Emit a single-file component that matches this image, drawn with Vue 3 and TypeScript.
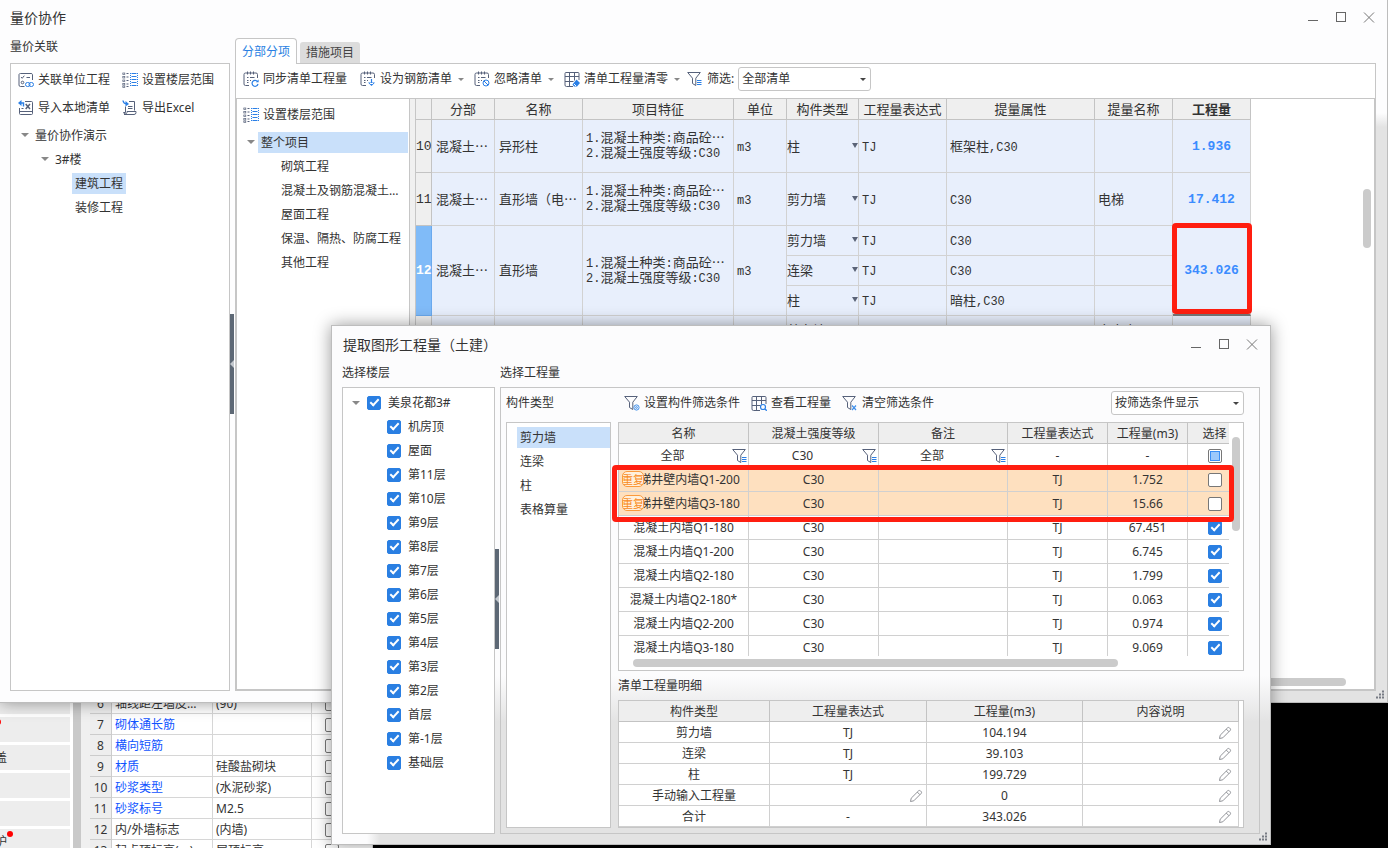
<script setup lang="ts">
import { defineComponent, h, ref } from 'vue'

const D = '#56617a'
const B = '#2a7fe6'
const note = `<path d="M14.500 7V3.500a1.500 1.500 0 0 0-1.500-1.500H2.500A1.500 1.500 0 0 0 1 3.500V13A1.500 1.500 0 0 0 2.500 14.500H6M4.500 0.500V3.500M7.500 0.500V3.500M10.500 0.500V3.500" stroke="${D}"/><path d="M4 6.500H5.500M7 6.500H11.500M4 9.500H5.500M7 9.500H8M4 11.500H5.500" stroke="${D}"/>`
const funnel = `<path d="M0.700 1.500H13.300L8.800 7.200V14.500L5.500 12.500V7.200Z" stroke="${D}"/>`
const grid = `<path d="M9 15.500H2.500A1.500 1.500 0 0 1 1 14V2.500A1 1 0 0 1 2 1.500H14A1 1 0 0 1 15 2.500V9M1 5.500H15M1 10.500H9.500M5.500 1.500V15.500M10.500 1.500V9.500" stroke="${D}"/>`
const rings = [2, 5.5, 9, 12.5, 15]
  .map((y) => `<rect x="0.800" y="${y - 1}" width="2" height="1.500" stroke="${D}" stroke-width="0.700"/><path d="M4.500 ${y - 0.5}H6.500" stroke="${D}"/>`)
  .join('')

const art: Record<string, string> = {
  link: `<path d="M14.500 8V2.500A1.500 1.500 0 0 0 13 1.500H2.500A1.500 1.500 0 0 0 1 2.500V13A1.500 1.500 0 0 0 2.500 14.500H6.500" stroke="${D}"/><path d="M3 5L4.200 6.300L6.300 3.700M8.500 5.500H12" stroke="${D}"/><circle cx="4.500" cy="10.500" r="1.300" stroke="${D}"/><rect x="7.500" y="10.500" width="4.500" height="4" rx="2" stroke="${B}"/><rect x="11" y="10.500" width="4.500" height="4" rx="2" stroke="${B}"/>`,
  range: rings + `<path d="M9.500 1.500H14.500M9.500 4.500H14.500M9.500 7.500H14.500M9.500 10.500H14.500M9.500 13.500H14.500" stroke="${B}"/><path d="M8.500 1V15M15.500 1V15" stroke="${B}" stroke-dasharray="1 1"/>`,
  importX: `<path d="M7 1.500H13.500A1 1 0 0 1 14.500 2.500V13.500A1 1 0 0 1 13.500 14.500H2.500A1 1 0 0 1 1.500 13.500V8M1.500 11.500H14.500M3.500 8.500H5.500" stroke="${D}"/><path d="M7.700 4L12 9M12 4L7.700 9" stroke="${D}" stroke-width="1.500"/><path d="M5.500 6.500V3H2" stroke="${B}" stroke-width="1.400"/><path d="M3.500 0V6L0 3Z" fill="${B}"/>`,
  exportX: `<path d="M7 1.500H12.500V10.500M3.500 6.500V12.500M2 14.500H12A2 2 0 0 0 14 12.500V11.500H5V12.500A1.800 1.800 0 0 1 1.500 12.500H3.500M6 6.500H10.500M6 8.500H10.500" stroke="${D}"/><path d="M1 0.500Q1.500 3.500 4 3.700" stroke="${B}" stroke-width="1.400"/><path d="M3.500 1L7 4L3.500 6.500Z" fill="${B}"/>`,
  sync: note + `<path d="M14.500 10.500A3 3 0 1 0 15 13" stroke="${B}" stroke-width="1.200"/><path d="M15.600 8.500V11.300H12.800Z" fill="${B}"/>`,
  rebar: note + `<path d="M11.500 8V13" stroke="${B}" stroke-width="1.200"/><path d="M8 11.500H15L11.500 15Z" fill="${B}"/><path d="M10 12.500H13" stroke="#fff"/>`,
  ignore: note + `<circle cx="12" cy="12" r="3" stroke="${B}"/><path d="M10 10L14 14" stroke="${B}"/>`,
  clear: grid + `<path d="M12.500 8.500L16 12L13 15.500H10L8.500 13.500Z" fill="${B}"/><path d="M10 13L12 15" stroke="#fff"/>`,
  view: grid + `<circle cx="12" cy="12" r="2.500" stroke="${B}" stroke-width="1.200"/><path d="M14 14L15.800 15.800" stroke="${B}" stroke-width="1.300"/>`,
  filter: funnel + `<path d="M10 9.500H14.500M10 11.500H14.500M10 13.500H14.500" stroke="${B}"/>`,
  filterSet: funnel + `<circle cx="12.500" cy="12.500" r="2.600" stroke="#3f8fea"/><circle cx="12.500" cy="12.500" r="0.900" stroke="#3f8fea"/>`,
  filterX: funnel + `<path d="M10 10.500L14 15M14 10.500L10 15" stroke="#3f8fea" stroke-width="1.200"/>`,
  pencil: `<path d="M2.500 13.500L3.200 10.200L10.600 2.800Q11.500 2 12.500 2.900L13.100 3.500Q14 4.500 13.200 5.400L5.800 12.800ZM9.300 4.100L11.900 6.700" stroke="#85878c" stroke-width="0.900"/>`,
  min: `<path d="M3 10.500H13" stroke="#666"/>`,
  max: `<rect x="3.500" y="2.500" width="9" height="9" stroke="#666"/>`,
  close: `<path d="M3 2.500L13 12.500M13 2.500L3 12.500" stroke="#777"/>`,
  grip: `<path d="M7 1.500H9M4 4.500H6M7 4.500H9M1 7.500H3M4 7.500H6M7 7.500H9" stroke="#777b84" stroke-width="2"/>`,
}

const Ico = defineComponent({
  props: { n: { type: String, required: true } },
  setup: (p) => () =>
    h('svg', { width: 16, height: 16, viewBox: '0 0 16 16', fill: 'none', 'aria-hidden': 'true', innerHTML: art[p.n] }),
})

const Mixed = defineComponent({
  props: { t: { type: String, required: true } },
  setup: (p) => () =>
    h('span', { class: 'mixed' }, p.t.split(/([\x20-\x7e]+)/).filter(Boolean).map((s) =>
      /^[\x20-\x7e]/.test(s) ? h('span', { class: 'mono' }, s) : s)),
})

const mainFilter = ref('全部清单')
const dialogFilter = ref('按筛选条件显示')

interface Sub { kind: string; attr: string; name: string }
interface Item { no: string; title: string; qty: string; subs: Sub[] }
const items: Item[] = [
  { no: '10', title: '异形柱', qty: '1.936', subs: [{ kind: '柱', attr: '框架柱,C30', name: '' }] },
  { no: '11', title: '直形墙（电…', qty: '17.412', subs: [{ kind: '剪力墙', attr: 'C30', name: '电梯' }] },
  { no: '12', title: '直形墙', qty: '343.026', subs: [
    { kind: '剪力墙', attr: 'C30', name: '' },
    { kind: '连梁', attr: 'C30', name: '' },
    { kind: '柱', attr: '暗柱,C30', name: '' }] },
  { no: '', title: '', qty: '', subs: [{ kind: '剪力墙', attr: 'C30', name: '自密实' }] },
]
const gridHeads = ['', '分部', '名称', '项目特征', '单位', '构件类型', '工程量表达式', '提量属性', '提量名称', '工程量']
const gridWidths = [16, 63, 88, 151, 53, 72, 88, 148, 78, 78]
const sections = ['砌筑工程', '混凝土及钢筋混凝土…', '屋面工程', '保温、隔热、防腐工程', '其他工程']
const floors = ['机房顶', '屋面', '第11层', '第10层', '第9层', '第8层', '第7层', '第6层', '第5层', '第4层', '第3层', '第2层', '首层', '第-1层', '基础层']
const kinds = ['剪力墙', '连梁', '柱', '表格算量']
const walls = [
  { name: '电梯井壁内墙Q1-200', v: '1.752', dup: true },
  { name: '电梯井壁内墙Q3-180', v: '15.66', dup: true },
  { name: '混凝土内墙Q1-180', v: '67.451', dup: false },
  { name: '混凝土内墙Q1-200', v: '6.745', dup: false },
  { name: '混凝土内墙Q2-180', v: '1.799', dup: false },
  { name: '混凝土内墙Q2-180*', v: '0.063', dup: false },
  { name: '混凝土内墙Q2-200', v: '0.974', dup: false },
  { name: '混凝土内墙Q3-180', v: '9.069', dup: false },
]
const details = [
  ['剪力墙', 'TJ', '104.194'], ['连梁', 'TJ', '39.103'], ['柱', 'TJ', '199.729'],
  ['手动输入工程量', '', '0'], ['合计', '-', '343.026'],
]
const props = [
  { n: '6', k: '轴线距左墙皮…', v: '(90)', blue: false },
  { n: '7', k: '砌体通长筋', v: '', blue: true },
  { n: '8', k: '横向短筋', v: '', blue: true },
  { n: '9', k: '材质', v: '硅酸盐砌块', blue: true },
  { n: '10', k: '砂浆类型', v: '(水泥砂浆)', blue: true },
  { n: '11', k: '砂浆标号', v: 'M2.5', blue: true },
  { n: '12', k: '内/外墙标志', v: '(内墙)', blue: false },
  { n: '13', k: '起点顶标高(m)', v: '层顶标高', blue: false },
]
const modules = [
  { t: '', dot: false }, { t: '', dot: true }, { t: '盖', dot: false },
  { t: '', dot: false }, { t: '', dot: false }, { t: '护', dot: true },
]
</script>

<template>
  <div class="desktop">
    <div class="backdrop">
      <ul class="modules">
        <li v-for="(m, i) in modules" :key="i"><span>{{ m.t }}<i v-if="m.dot" class="dot"></i></span></li>
      </ul>
      <div class="back-scroll"></div>
      <div class="back-props">
        <table>
          <tbody>
            <tr v-for="p in props" :key="p.n">
              <th scope="row">{{ p.n }}</th>
              <td :class="{ blue: p.blue }">{{ p.k }}</td>
              <td>{{ p.v }}</td>
              <td><input type="checkbox" class="ck" :aria-label="p.k" /></td>
            </tr>
          </tbody>
        </table>
      </div>
    </div>

    <section class="win main-win">
      <header class="title">
        <h1>量价协作</h1>
        <div class="win-btns">
          <button aria-label="最小化"><Ico n="min" /></button>
          <button aria-label="最大化"><Ico n="max" /></button>
          <button aria-label="关闭"><Ico n="close" /></button>
        </div>
      </header>
      <div class="main-body">
        <aside class="link-col">
          <h2>量价关联</h2>
          <div class="box link-box">
            <div class="tool-grid">
              <button><Ico n="link" />关联单位工程</button>
              <button><Ico n="range" />设置楼层范围</button>
              <button><Ico n="importX" />导入本地清单</button>
              <button><Ico n="exportX" />导出Excel</button>
            </div>
            <ul class="tree">
              <li class="l1"><i class="arr"></i><span>量价协作演示</span></li>
              <li class="l2"><i class="arr"></i><span>3#楼</span></li>
              <li class="l3"><span class="sel">建筑工程</span></li>
              <li class="l3"><span>装修工程</span></li>
            </ul>
          </div>
        </aside>
        <div class="splitter"><i></i></div>
        <div class="work-col">
          <nav class="tabs">
            <button class="on">分部分项</button>
            <button>措施项目</button>
          </nav>
          <div class="work">
            <div class="toolbar">
              <button><Ico n="sync" />同步清单工程量</button>
              <button><Ico n="rebar" />设为钢筋清单<i class="arr"></i></button>
              <button><Ico n="ignore" />忽略清单<i class="arr"></i></button>
              <button><Ico n="clear" />清单工程量清零<i class="arr"></i></button>
              <label class="filter" for="mf"><Ico n="filter" />筛选:</label>
              <div class="pick"><select id="mf" v-model="mainFilter"><option>全部清单</option></select></div>
            </div>
            <div class="work-row">
              <div class="project">
                <button class="set-range"><Ico n="range" />设置楼层范围</button>
                <ul class="ptree">
                  <li class="root"><i class="arr"></i><span>整个项目</span></li>
                  <li v-for="s in sections" :key="s">{{ s }}</li>
                </ul>
              </div>
              <div class="sheet">
                <table class="bill">
                  <colgroup><col v-for="(w, i) in gridWidths" :key="i" :style="{ width: w + 'px' }" /></colgroup>
                  <thead><tr><th v-for="(t, i) in gridHeads" :key="i" scope="col">{{ t }}</th></tr></thead>
                  <tbody v-for="it in items" :key="it.no">
                    <tr v-for="(s, i) in it.subs" :key="i" :class="{ tall: it.subs.length === 1 && it.no }">
                      <template v-if="i === 0">
                        <th scope="row" :rowspan="it.subs.length" :class="{ cur: it.no === '12' }">{{ it.no }}</th>
                        <td :rowspan="it.subs.length" class="pad">{{ it.no ? '混凝土…' : '' }}</td>
                        <td :rowspan="it.subs.length" class="pad">{{ it.title }}</td>
                        <td :rowspan="it.subs.length" class="feat">
                          <template v-if="it.no"><Mixed t="1.混凝土种类:商品砼…" /><Mixed t="2.混凝土强度等级:C30" /></template>
                        </td>
                        <td :rowspan="it.subs.length" class="mid"><Mixed :t="it.no ? 'm3' : ''" /></td>
                      </template>
                      <td class="kind"><div>{{ s.kind }}<i class="arr"></i></div></td>
                      <td class="mid"><Mixed t="TJ" /></td>
                      <td class="mid"><Mixed :t="s.attr" /></td>
                      <td class="mid">{{ s.name }}</td>
                      <td v-if="i === 0" :rowspan="it.subs.length" class="qty" :class="{ picked: it.no === '12' }">{{ it.qty }}<i v-if="it.no === '12'" class="mark"></i></td>
                    </tr>
                  </tbody>
                </table>
                <i class="vbar"></i><i class="hbar"></i>
              </div>
            </div>
          </div>
        </div>
      </div>
      <span class="grip"><Ico n="grip" /></span>
    </section>

    <section class="win dialog" role="dialog" aria-label="提取图形工程量（土建）">
      <header class="title">
        <h1>提取图形工程量（土建）</h1>
        <div class="win-btns">
          <button aria-label="最小化"><Ico n="min" /></button>
          <button aria-label="最大化"><Ico n="max" /></button>
          <button aria-label="关闭"><Ico n="close" /></button>
        </div>
      </header>
      <div class="dlg-body">
        <aside class="floor-col">
          <h2>选择楼层</h2>
          <ul class="box floors">
            <li class="root"><i class="arr"></i><label><input type="checkbox" class="ck" checked />美泉花都3#</label></li>
            <li v-for="f in floors" :key="f"><label><input type="checkbox" class="ck" checked />{{ f }}</label></li>
          </ul>
        </aside>
        <div class="splitter dsplit"><i></i></div>
        <div class="qty-col">
          <h2>选择工程量</h2>
          <div class="group">
            <div class="kind-col">
              <h3>构件类型</h3>
              <ul class="box kinds"><li v-for="(k, i) in kinds" :key="k" :class="{ sel: i === 0 }">{{ k }}</li></ul>
            </div>
            <div class="tables">
              <div class="dtools">
                <button><Ico n="filterSet" />设置构件筛选条件</button>
                <button><Ico n="view" />查看工程量</button>
                <button><Ico n="filterX" />清空筛选条件</button>
                <div class="pick"><select v-model="dialogFilter" aria-label="显示方式"><option>按筛选条件显示</option></select></div>
              </div>
              <div class="box wall-box">
                <div class="clip">
                  <table class="plain walls">
                    <colgroup><col class="w130" /><col class="w130" /><col class="w129" /><col class="w100" /><col class="w80" /><col class="w54" /></colgroup>
                    <thead>
                      <tr><th scope="col">名称</th><th scope="col">混凝土强度等级</th><th scope="col">备注</th><th scope="col">工程量表达式</th><th scope="col">工程量(m3)</th><th scope="col">选择</th></tr>
                    </thead>
                    <tbody>
                      <tr>
                        <td v-for="(t, i) in ['全部', 'C30', '全部']" :key="i"><div class="ff"><span>{{ t }}</span><button aria-label="筛选"><Ico n="filter" /></button></div></td>
                        <td>-</td><td>-</td>
                        <td><input type="checkbox" class="ck part" aria-label="全选" /></td>
                      </tr>
                      <tr v-for="w in walls" :key="w.name" :class="{ dup: w.dup }">
                        <td>{{ w.name }}<b v-if="w.dup" class="badge">重复</b></td><td>C30</td><td></td><td>TJ</td><td>{{ w.v }}</td>
                        <td><input type="checkbox" class="ck" :checked="!w.dup" :aria-label="w.name" /></td>
                      </tr>
                    </tbody>
                  </table>
                </div>
                <i class="vbar"></i><i class="hbar"></i><i class="mark"></i>
              </div>
              <h3 class="detail-title">清单工程量明细</h3>
              <div class="box detail-box">
                <table class="plain details">
                  <colgroup><col class="w151" /><col class="w157" /><col class="w156" /><col class="w156" /></colgroup>
                  <thead><tr><th scope="col">构件类型</th><th scope="col">工程量表达式</th><th scope="col">工程量(m3)</th><th scope="col">内容说明</th></tr></thead>
                  <tbody>
                    <tr v-for="d in details" :key="d[0]">
                      <td>{{ d[0] }}</td>
                      <td>{{ d[1] }}<button v-if="!d[1]" class="edit" aria-label="编辑"><Ico n="pencil" /></button></td>
                      <td>{{ d[2] }}</td>
                      <td><button class="edit" aria-label="编辑"><Ico n="pencil" /></button></td>
                    </tr>
                  </tbody>
                </table>
              </div>
            </div>
          </div>
        </div>
      </div>
      <span class="grip"><Ico n="grip" /></span>
    </section>
  </div>
</template>

<style>
body { background: #000; }
.mixed { display: block; height: 15px; }
.mono { font-family: "Liberation Mono", monospace; font-size: 12px; }
</style>

<style scoped>
.desktop {
  position: relative; height: 100vh; overflow: hidden; background: #000; color: #333;
  font: 12px/24px "Noto Sans", "Noto Sans CJK SC", sans-serif;
}
.desktop *, .desktop *::before, .desktop *::after { box-sizing: border-box; }
ul { list-style: none; margin: 0; padding: 0; }
h1, h2, h3 { margin: 0; font-size: 12px; font-weight: 400; }
h1 { font-size: 14px; }
button { border: 0; background: none; padding: 0; margin: 0; font: inherit; color: inherit; display: flex; align-items: center; white-space: nowrap; }
svg { display: block; flex: none; }
table { border-collapse: separate; border-spacing: 0; table-layout: fixed; }
th, td { padding: 0; font-weight: 400; white-space: nowrap; }
.box { border: 1px solid #c6c6c6; background: #fff; }
.arr { flex: none; border: 4px solid transparent; border-top: 4px solid #888; border-bottom: 0; }
.mark { position: absolute; border: 5px solid #ff1e10; border-radius: 4px; }

.ck { appearance: none; flex: none; display: block; position: relative; width: 14px; height: 14px; margin: 0; border: 1px solid #777; border-radius: 2px; background: #fff; }
.ck:checked { border-color: #2a7fe2; background: #2a7fe2; }
.ck:checked::after { content: ""; position: absolute; left: 2px; top: 2px; width: 9px; height: 5px; border: solid #fff; border-width: 0 0 2px 2px; transform: rotate(-47deg); }
.ck.part::after { content: ""; position: absolute; inset: 1px; border: 1px solid #3a8ef6; background: #9cc8fb; }

.backdrop { position: absolute; left: 0; bottom: 0; display: flex; width: 373px; height: 162px; background: #fff; }
.modules { width: 70px; padding-top: 3px; overflow: hidden; flex: none; }
.modules li { height: 25px; margin-bottom: 3px; background: #ededed; line-height: 25px; }
.modules span { position: relative; display: block; width: 12px; height: 25px; margin-left: -5px; }
.modules li:nth-child(2) span { margin-left: -17px; }
.dot { position: absolute; right: -6px; top: 2px; width: 6px; height: 6px; border-radius: 3px; background: #f00; }
.back-scroll { flex: none; width: 20px; border: solid #fff; border-width: 0 0 0 3px; border-right: 9px solid #f0f0f0; background: #c9c9c9; }
.back-props { flex: 1; padding-top: 7px; overflow: hidden; background: #f4f4f4; }
.back-props table { width: 100%; background: #fff; }
.back-props th, .back-props td { height: 21px; line-height: 18px; padding-top: 2px; }
.back-props th { width: 22px; background: #eee; border: solid #ccc; border-width: 0 1px 1px 0; }
.back-props td { width: 101px; padding-left: 3px; border: solid #d6d6d6; border-width: 0 1px 1px 0; }
.back-props td:nth-child(3) { width: 99px; }
.back-props td:nth-child(4) { width: auto; padding-left: 13px; }
.blue { color: #0f53ff; }

.win { position: absolute; display: flex; flex-direction: column; border: 1px solid #bdbdbd; box-shadow: 0 0 16px rgba(0, 0, 0, .4); }
.main-win {
  inset: 0 0 145px 0; padding: 0 11px 11px 10px; border-left: 0; border-top: 0;
  background: linear-gradient(#fdfdfe 0 113px, #e3e3e3 127px) right top / 200px 100% no-repeat, linear-gradient(90deg, #fdfdfe 370px, #e3e3e3 420px) bottom / 100% 14px no-repeat, #fdfdfe;
}
.title { display: flex; justify-content: space-between; align-items: center; height: 34px; flex: none; padding-top: 2px; }
.title .win-btns { display: flex; gap: 12px; }
.main-win .win-btns { margin-right: -1px; }
.grip { position: absolute; right: -4px; bottom: -4px; }
.main-body { flex: 1; display: flex; min-height: 0; }
.link-col { flex: none; width: 220px; display: flex; flex-direction: column; }
.link-col h2 { height: 29px; line-height: 26px; }
.link-box { flex: 1; padding-top: 2px; }
.tool-grid { display: grid; grid-template-columns: 104px 1fr; grid-auto-rows: 28px; padding-left: 7px; }
.tool-grid button { gap: 4px; }
.tree { padding-top: 1px; }
.tree li { display: flex; align-items: center; height: 24px; gap: 3px; padding-left: 10px; }
.tree .l2 { padding-left: 30px; }
.tree .l3 { padding-left: 61px; }
.tree li span, .ptree li span { height: 21px; line-height: 21px; padding: 0 3px; }
.tree .arr, .ptree .arr { margin-bottom: 1px; }
.sel { background: #c9e0fa; }
.splitter { flex: none; width: 5px; display: flex; align-items: center; }
.splitter i { width: 4px; height: 100px; background: #5d6875; display: flex; align-items: center; }
.main-win .splitter { align-items: flex-start; padding-top: 280px; }
.splitter i::after { content: ""; border: 4px solid transparent; border-right-color: #c3c8ce; border-left: 0; }
.work-col { flex: 1; min-width: 0; display: flex; flex-direction: column; }
.tabs { display: flex; align-items: flex-end; gap: 3px; height: 29px; flex: none; margin-top: 1px; position: relative; z-index: 1; margin-bottom: -1px; }
.tabs button { width: 60px; height: 21px; margin-bottom: 1px; justify-content: center; border-radius: 3px 3px 0 0; background: #dcdcdc; color: #444; }
.tabs .on { width: 62px; height: 26px; margin: 0; border: 1px solid #c6c6c6; border-bottom: 0; border-radius: 4px 4px 0 0; background: #fff; color: #2a7fe2; }
.work { flex: 1; display: flex; flex-direction: column; min-height: 0; border: 1px solid #c6c6c6; background: #fff; }
.toolbar { height: 34px; flex: none; display: flex; align-items: center; padding: 0 7px 4px; }
.toolbar button, .toolbar .filter { gap: 4px; margin-right: 13px; display: flex; align-items: center; }
.toolbar .arr, .pick::after { border: 3px solid transparent; border-top: 3px solid #888; border-bottom: 0; }
.toolbar button .arr { margin-left: 2px; margin-right: -3px; }
.toolbar .filter { margin: 0 4px 0 -3px; }
.pick { position: relative; width: 133px; height: 24px; }
.pick::after { content: ""; position: absolute; right: 5px; top: 11px; border-top-color: #444; }
.pick select { appearance: none; width: 100%; height: 24px; margin: 0; padding: 0 3px; border: 1px solid #c6c6c6; border-radius: 3px; background: #fff; font: inherit; line-height: 22px; color: inherit; display: block; }
.work-row { flex: 1; display: flex; min-height: 0; border: 1px solid #c6c6c6; background: #f0f0f0; }
.project { flex: none; width: 173px; border-right: 1px solid #c6c6c6; background: #fff; margin-right: 5px; }
.set-range { gap: 4px; height: 31px; padding-left: 6px; }
.ptree li { height: 24px; line-height: 25px; padding-left: 44px; }
.ptree .root { display: flex; align-items: center; padding: 0 1px 0 10px; gap: 3px; }
.ptree .root span { flex: 1; background: #c9e0fa; }
.sheet { position: relative; flex: 1; border-left: 1px solid #c6c6c6; background: #fff; overflow: hidden; }
.bill { width: 835px; font: 13px/15px "Noto Sans CJK SC", sans-serif; }
.bill thead th { height: 21px; padding-bottom: 2px; background: #efefef; border: solid #c3c3c3; border-width: 0 1px 1px 0; }
.bill thead th:last-child { font-weight: 700; }
.bill tbody tr { height: 30px; }
.bill tbody .tall { height: 53px; }
.bill tbody th { background: #efefef; border: solid #c3c3c3; border-width: 0 1px 1px 0; font: 13px/15px "Liberation Mono", monospace; }
.bill tbody .cur { background: #80bbf8; color: #fff; font-weight: 700; border-color: #6aa9ee; }
.bill td { padding-bottom: 2px; background: #e8effc; border: solid #d2d2d2; border-width: 0 1px 1px 0; overflow: hidden; }
.pad { padding-left: 4px; }
.bill .feat { padding: 0 0 4px 3px; }
.mid { padding-left: 3px; }
.kind div { display: flex; justify-content: space-between; align-items: center; }
.kind .arr { border: 3px solid transparent; border-top: 5px solid #5a6377; border-bottom: 0; }
.bill .qty { position: relative; padding: 0; overflow: visible; text-align: center; font: 700 13px/15px "Liberation Mono", monospace; color: #3b8cff; }
.bill .picked { border-bottom: 2px solid #777; }
.picked .mark { inset: -3px -2px 0 -1px; }
.vbar, .hbar { position: absolute; background: #cbcbcb; border-radius: 4px; }
.sheet .vbar { right: 3px; top: 90px; width: 8px; height: 59px; }
.sheet .hbar { right: 28px; bottom: 3px; width: 600px; height: 8px; }

.dialog {
  inset: 325px 117px 3px 331px; padding: 0 10px 10px;
  background: linear-gradient(90deg, #fcfcfd 35px, #fcfcfd00 48px), linear-gradient(#fcfcfd 350px, #e3e3e3 396px);
}
.dialog .title { height: 35px; padding: 2px 0 0 1px; }
.dlg-body { flex: 1; display: flex; min-height: 0; }
.dlg-body h2 { height: 26px; line-height: 24px; }
.floor-col { flex: none; width: 153px; display: flex; flex-direction: column; }
.floors { flex: 1; padding-top: 3px; }
.floors li { height: 24px; padding-left: 44px; display: flex; align-items: center; }
.floors .root { padding-left: 9px; gap: 7px; }
.floors label { display: flex; align-items: center; gap: 7px; }
.dsplit { padding-top: 2px; }
.qty-col { flex: 1; display: flex; flex-direction: column; min-width: 0; }
.group { flex: 1; display: flex; gap: 7px; min-height: 0; padding: 0 15px 5px 5px; border: 1px solid #c6c6c6; }
.kind-col { flex: none; width: 105px; display: flex; flex-direction: column; }
.kind-col h3 { height: 34px; line-height: 29px; }
.kinds { flex: 1; padding: 2px 0 0 10px; }
.kinds li { height: 21px; line-height: 21px; margin: 0 0 3px; padding-left: 3px; }
.kinds li:first-child { margin-top: 2px; }
.tables { flex: 1; min-width: 0; display: flex; flex-direction: column; }
.dtools { height: 34px; flex: none; display: flex; align-items: center; padding: 0 0 4px 6px; }
.dtools button { gap: 4px; margin-right: 11px; }
.dtools .pick { margin-left: auto; }
.wall-box { position: relative; height: 249px; flex: none; }
.clip { height: 233px; margin-right: 14px; overflow: hidden; }
.walls { width: 623px; }
.w130 { width: 130px; } .w129 { width: 129px; } .w100 { width: 100px; } .w80 { width: 80px; } .w54 { width: 54px; }
.w151 { width: 151px; } .w157 { width: 157px; } .w156 { width: 156px; }
.plain th, .plain td { position: relative; text-align: center; border: solid #d0d0d0; border-width: 0 1px 1px 0; }
.plain th { height: 21px; line-height: 18px; padding-top: 2px; background: #eee; border-color: #c3c3c3; }
.walls td { height: 24px; line-height: 23px; }
.plain .ck { margin: 0 auto; }
.ff { display: flex; align-items: center; }
.ff span { flex: 1; padding-right: 6px; }
.ff button { width: 16px; }
.plain .dup td { background: #fee0bf; }
.badge { position: absolute; left: 3px; top: 3px; width: 22px; height: 16px; border: 1px solid #fb9a3c; border-radius: 5px; background: #fff0dc; color: #f98a20; font: 400 11px/14px "Noto Sans CJK SC", sans-serif; overflow: hidden; display: flex; justify-content: center; }
.wall-box .vbar { right: 3px; top: 14px; width: 8px; height: 94px; }
.wall-box .hbar { left: 14px; bottom: 3px; width: 485px; height: 8px; }
.wall-box .mark { left: -7px; right: 9px; top: 42px; height: 57px; }
.detail-title { height: 29px; line-height: 29px; flex: none; }
.detail-box { flex: 1; }
.details td { height: 21px; line-height: 18px; padding-top: 2px; }
.details { width: 620px; }
.edit { position: absolute; right: 5px; top: 3px; }
.details td:nth-child(2) .edit { right: 2px; }
</style>
